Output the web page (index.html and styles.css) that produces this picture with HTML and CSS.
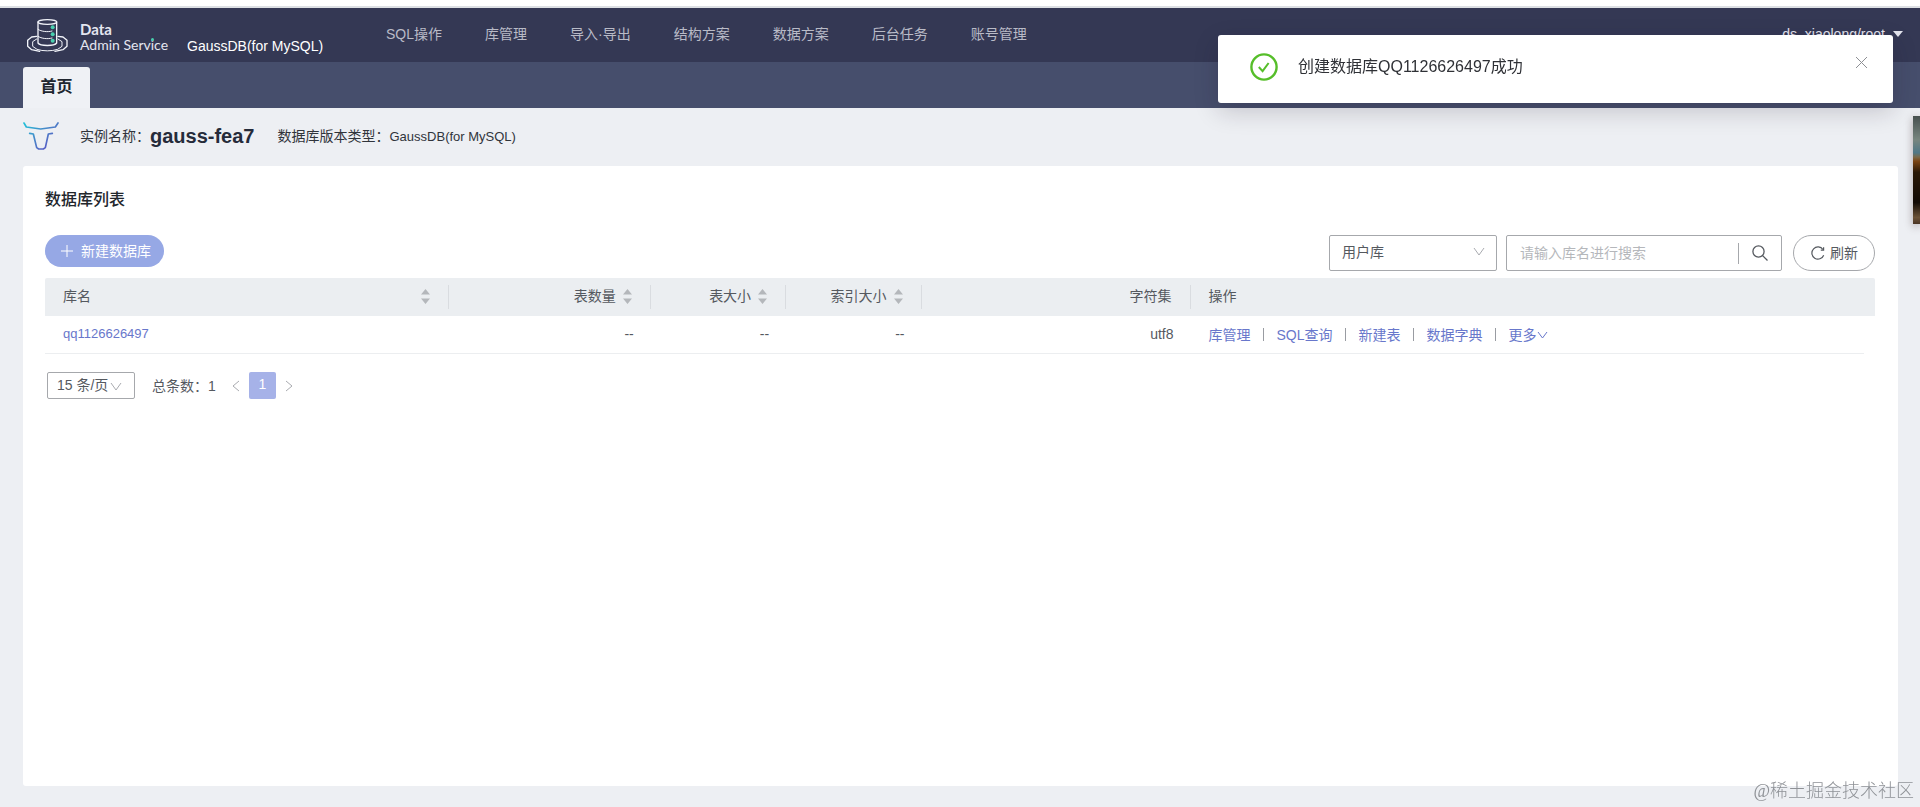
FILE: index.html
```html
<!DOCTYPE html>
<html lang="zh-CN">
<head>
<meta charset="utf-8">
<title>Data Admin Service</title>
<link rel="stylesheet" href="styles.css">
</head>
<body>
<header class="topbar">
  <div class="brand">
    <svg class="brand-logo" viewBox="0 0 123 99" fill="none" stroke="#f2f4fa" stroke-width="4" stroke-linecap="round" stroke-linejoin="round" aria-hidden="true">
      <ellipse cx="61" cy="9" rx="28" ry="7"/>
      <path d="M33 9V72C40 82 82 82 89 72V9"/>
      <path d="M33 31c10 7 30 9 42 5M33 52c10 7 30 9 42 5" stroke-width="3"/>
      <path d="M29 60 17 68v14l13 9c18 6 44 6 62 0l13-9V68L93 60" stroke-width="3"/>
      <path d="M29 52 14 54 2 64v18l12 10 24 5M93 52l15 2 12 10v18l-12 10-24 5"/>
      <g fill="#48cfae" stroke="none"><circle cx="77" cy="25" r="6"/><circle cx="77" cy="46" r="6"/><circle cx="77" cy="65" r="6"/></g>
    </svg>
    <div class="brand-name"><strong>Data</strong><span>Admin Serv<span class="dotted">i</span>ce</span></div>
    <span class="brand-engine">GaussDB(for MySQL)</span>
  </div>
  <nav class="menu">
    <a href="#">SQL操作</a>
    <a href="#">库管理</a>
    <a href="#">导入·导出</a>
    <a href="#">结构方案</a>
    <a href="#">数据方案</a>
    <a href="#">后台任务</a>
    <a href="#">账号管理</a>
  </nav>
  <button class="user" type="button">ds_xiaolong/root
    <svg viewBox="0 0 10 6" aria-hidden="true"><path d="M0 0h10L5 6z" fill="currentColor"/></svg>
  </button>
</header>
<div class="tabs"><a class="tab" href="#">首页</a></div>

<section class="instance">
  <svg class="instance-icon" viewBox="0 0 108 84" fill="none" stroke="url(#bull)" stroke-width="5" stroke-linecap="round" stroke-linejoin="round" aria-hidden="true">
    <defs><linearGradient id="bull" gradientUnits="userSpaceOnUse" x1="10" y1="0" x2="85" y2="84"><stop offset="0" stop-color="#22bfd8"/><stop offset=".5" stop-color="#4a86c8"/><stop offset="1" stop-color="#5a4fc4"/></linearGradient></defs>
    <path d="M3 3 10 15 53 21 97 15 105 3"/>
    <path d="M20 34l11 2 10 41 6 4h14l6-4 9-41 12-2"/>
  </svg>
  <span class="instance-label">实例名称：</span>
  <strong class="instance-name">gauss-fea7</strong>
  <span>数据库版本类型：<span class="engine">GaussDB(for MySQL)</span></span>
</section>

<main class="card">
  <h1 class="card-title">数据库列表</h1>
  <div class="toolbar">
    <button class="create" type="button">
      <svg viewBox="0 0 12 12" stroke="currentColor" aria-hidden="true"><path d="M6 0v12M0 6h12"/></svg>新建数据库
    </button>
    <div class="filters">
      <div class="select-box">
        <select class="select" aria-label="库类型"><option>用户库</option></select>
        <svg class="chevron" viewBox="0 0 12 9" aria-hidden="true"><path d="M1 1l5 7 5-7"/></svg>
      </div>
      <div class="search">
        <input type="text" placeholder="请输入库名进行搜索" aria-label="搜索库名">
        <button type="button" aria-label="搜索">
          <svg viewBox="0 0 16 16" fill="none" stroke="currentColor" stroke-width="1.3" aria-hidden="true"><circle cx="6.5" cy="6.5" r="5.6"/><path d="M10.6 10.6 15.5 15.5"/></svg>
        </button>
      </div>
      <button class="refresh" type="button">
        <svg viewBox="0 0 14 14" fill="none" stroke="currentColor" stroke-width="1.2" aria-hidden="true"><path d="M12.7 9.2A6.1 6.1 0 1 1 12 3.5"/><path d="M12.6 1.2v3H9.800"/></svg>刷新
      </button>
    </div>
  </div>

  <table class="grid">
    <colgroup><col class="c-name"><col class="c-count"><col class="c-size"><col class="c-size"><col class="c-charset"><col></colgroup>
    <thead>
      <tr>
        <th><div class="head spread">库名<svg class="sort" viewBox="0 0 9 15" aria-hidden="true"><path d="M0 5.500 4.500 0 9 5.500zM0 9.500h9L4.500 15z"/></svg></div></th>
        <th><div class="head">表数量<svg class="sort" viewBox="0 0 9 15" aria-hidden="true"><path d="M0 5.500 4.500 0 9 5.500zM0 9.500h9L4.500 15z"/></svg></div></th>
        <th><div class="head">表大小<svg class="sort" viewBox="0 0 9 15" aria-hidden="true"><path d="M0 5.500 4.500 0 9 5.500zM0 9.500h9L4.500 15z"/></svg></div></th>
        <th><div class="head">索引大小<svg class="sort" viewBox="0 0 9 15" aria-hidden="true"><path d="M0 5.500 4.500 0 9 5.500zM0 9.500h9L4.500 15z"/></svg></div></th>
        <th><div class="head">字符集</div></th>
        <th><div class="head spread last">操作</div></th>
      </tr>
    </thead>
    <tbody>
      <tr>
        <td class="name"><a href="#">qq1126626497</a></td>
        <td>--</td>
        <td>--</td>
        <td>--</td>
        <td>utf8</td>
        <td class="ops"><div class="actions">
          <a href="#">库管理</a><i class="bar"></i><a href="#">SQL查询</a><i class="bar"></i><a href="#">新建表</a><i class="bar"></i><a href="#">数据字典</a><i class="bar"></i><a class="more" href="#">更多<svg viewBox="0 0 11 8" fill="none" stroke="currentColor" aria-hidden="true"><path d="M1 1l4.500 6L10 1"/></svg></a>
        </div></td>
      </tr>
    </tbody>
  </table>

  <div class="pager">
    <div class="select-box small">
      <select class="select" aria-label="每页条数"><option>15 条/页</option></select>
      <svg class="chevron" viewBox="0 0 12 9" aria-hidden="true"><path d="M1 1l5 7 5-7"/></svg>
    </div>
    <span class="total">总条数：1</span>
    <button class="arrow" type="button" aria-label="上一页"><svg viewBox="0 0 8 12" aria-hidden="true"><path d="M7 1 1 6l6 5"/></svg></button>
    <button class="page" type="button">1</button>
    <button class="arrow" type="button" aria-label="下一页"><svg viewBox="0 0 8 12" aria-hidden="true"><path d="M1 1l6 5-6 5"/></svg></button>
  </div>
</main>

<div class="side-photo"></div>

<div class="toast" role="status">
  <svg class="toast-icon" viewBox="0 0 28 28" fill="none" stroke="#56be2a" stroke-width="2.4" aria-hidden="true"><circle cx="14" cy="14" r="12.600"/><path d="M8.800 14l3.800 4.200 6-8.200" stroke-width="2"/></svg>
  <span class="toast-text">创建数据库QQ1126626497成功</span>
  <button class="toast-close" type="button" aria-label="关闭"><svg viewBox="0 0 11 11" stroke="currentColor" aria-hidden="true"><path d="M0 0l11 11M11 0 0 11"/></svg></button>
</div>
<div class="watermark">@稀土掘金技术社区</div>
</body>
</html>
```
FILE: styles.css
```css
* { box-sizing: border-box; }

body {
  margin: 0;
  min-height: 100vh;
  display: flex;
  flex-direction: column;
  background: #edeff3;
  color: #55595f;
  font: 14px/20px "Liberation Sans", "Noto Sans CJK SC", sans-serif;
  border-top: 6px solid #fff;
}

a { color: inherit; text-decoration: none; }
button, select, input { font: inherit; color: inherit; }
button { padding: 0; border: 0; background: none; }
svg { flex: none; }

.topbar {
  display: flex;
  align-items: center;
  height: 56px;
  padding: 0 17px 0 27px;
  border-top: 2px solid #dde0e4;
  background: #343854;
}

.brand { display: flex; align-items: center; width: 359px; }
.brand-logo { width: 41px; height: 33px; }
.brand-name {
  display: flex;
  flex-direction: column;
  width: 107px;
  padding: 3px 0 0 12px;
  color: #e4e6f0;
  font: 14px/16px Lato, sans-serif;
}
.brand-name strong { font-size: 15px; font-weight: 700; }
.dotted { position: relative; }
.dotted::before {
  content: "";
  position: absolute;
  top: 2px;
  left: 0;
  width: 3px;
  height: 3px;
  border-radius: 50%;
  background: #48cfae;
}
.brand-engine { margin-left: 12px; padding-top: 21px; color: #fff; }

.menu { display: flex; gap: 43px; padding-bottom: 2px; color: #b9bbc7; }

.user {
  display: flex;
  align-items: center;
  gap: 8px;
  margin-left: auto;
  padding-bottom: 2px;
  color: #e4e5ee;
}
.user svg { width: 10px; height: 6px; }

.tabs {
  height: 46px;
  padding: 5px 23px 0;
  background: #464e6c;
}
.tab {
  display: block;
  width: 67px;
  height: 41px;
  border-radius: 3px 3px 0 0;
  background: #eff1f5;
  color: #20262f;
  font-size: 16px;
  font-weight: 700;
  line-height: 40px;
  text-align: center;
}

.instance {
  display: flex;
  align-items: center;
  height: 58px;
  padding: 0 23px 2px;
  color: #30343b;
}
.instance-icon { width: 36px; height: 28px; }
.instance-label { margin-left: 21px; }
.instance-name { margin-right: 23px; color: #252b3a; font-size: 20px; }
.engine { font-size: 13px; }

.card {
  flex: 1;
  margin: 0 22px 21px 23px;
  padding: 22px 23px 0 22px;
  border-radius: 3px;
  background: #fff;
}
.card-title {
  margin: 0;
  color: #22262c;
  font-size: 16px;
  font-weight: 500;
  line-height: 24px;
}

.toolbar {
  display: flex;
  justify-content: space-between;
  align-items: flex-start;
  margin: 23px 0 7px;
}
.create {
  display: flex;
  align-items: center;
  gap: 8px;
  height: 32px;
  padding: 0 13px 0 16px;
  border-radius: 16px;
  background: #96a8e5;
  color: #fff;
}
.create svg { width: 12px; height: 12px; }

.filters { display: flex; }
.select-box { display: grid; width: 168px; height: 36px; margin-right: 9px; }
.select-box > * { grid-area: 1 / 1; }
.select {
  width: 100%;
  padding: 0 12px 2px;
  border: 1px solid #a6a8ac;
  border-radius: 2px;
  background: #fff;
  appearance: none;
}
.chevron {
  width: 12px;
  height: 9px;
  margin: 0 12px 3px 0;
  place-self: center end;
  fill: none;
  stroke: #a9abb0;
  pointer-events: none;
}

.search {
  display: flex;
  align-items: center;
  width: 276px;
  height: 36px;
  margin-right: 11px;
  border: 1px solid #a6a8ac;
  border-radius: 2px;
}
.search input {
  flex: 1;
  min-width: 0;
  padding: 0 13px;
  border: 0;
  outline: 0;
  background: none;
}
.search input::placeholder { color: #b5b7bb; }
.search button {
  display: flex;
  height: 21px;
  padding: 2px 13px;
  border-left: 1px solid #a6a8ac;
}
.search svg { width: 16px; height: 16px; }

.refresh {
  display: flex;
  align-items: center;
  gap: 5px;
  height: 36px;
  padding: 0 16px 0 17px;
  border: 1px solid #a6a8ac;
  border-radius: 18px;
}
.refresh svg { width: 14px; height: 14px; }

.grid {
  width: 100%;
  border-spacing: 0;
  table-layout: fixed;
}
.c-name { width: 22.1%; }
.c-count { width: 11%; }
.c-size { width: 7.4%; }
.c-charset { width: 14.7%; }
.grid th { height: 38px; padding: 0; background: #ebeef1; font-weight: 400; }
.grid th:first-child { border-radius: 2px 0 0 0; }
.grid th:last-child { border-radius: 0 2px 0 0; }
.head {
  display: flex;
  align-items: center;
  justify-content: flex-end;
  gap: 7px;
  height: 24px;
  padding: 0 18px 2px;
  border-right: 1px solid #d9dce0;
}
.head.spread { justify-content: space-between; }
.head.last { border: 0; }
.sort { width: 9px; height: 15px; fill: #b4b7bb; }
.grid td {
  height: 38px;
  padding: 0 17px 1px 0;
  border-bottom: 1px solid #eceef0;
  text-align: right;
}
.grid a { color: #6877cb; }
.grid .name { padding-left: 18px; font-size: 13px; text-align: left; }
.grid .ops {
  padding: 0 0 1px 18px;
  border-bottom: 0;
  background: linear-gradient(#eceef0, #eceef0) 0 100% / calc(100% - 11px) 1px no-repeat;
}
.actions { display: flex; align-items: center; }
.bar { width: 1px; height: 13px; margin: 0 13px 0 12px; background: #999ca2; }
.more { display: flex; align-items: center; }
.more svg { width: 11px; height: 8px; }

.pager { display: flex; align-items: center; margin: 18px 2px 0; }
.small { width: 88px; height: 27px; margin-right: 17px; }
.small .select { padding: 0 9px 2px; }
.small .chevron { margin: 2px 13px 0 0; }
.total { margin-right: 16px; }
.arrow { display: flex; }
.arrow svg { width: 8px; height: 12px; fill: none; stroke: #a9abb0; }
.page {
  width: 27px;
  height: 27px;
  margin: 0 9px;
  padding-bottom: 3px;
  border-radius: 2px;
  background: #a6b2e8;
  color: #fff;
}

.side-photo {
  position: fixed;
  top: 116px;
  right: 0;
  width: 7px;
  height: 108px;
  background: linear-gradient(#47504f, #78867f 22%, #4f7887 34%, #7a6a4a 38%, #7a4312 42%, #2a1806 52%, #120b05 80%, #6b5238 94%, #4a3524);
  box-shadow: 0 2px 8px rgba(60, 40, 40, .4);
}

.toast {
  position: fixed;
  top: 35px;
  right: 27px;
  display: flex;
  align-items: flex-start;
  width: 675px;
  height: 68px;
  padding: 18px 26px 0 32px;
  border-radius: 3px;
  background: #fff;
  box-shadow: 0 8px 24px rgba(30, 20, 40, .2);
}
.toast-icon { width: 28px; height: 28px; }
.toast-text { margin-left: 20px; color: #2f3136; font-size: 16px; line-height: 28px; }
.toast-close { margin: 4px 0 0 auto; color: #8d8f94; line-height: 0; }
.toast-close svg { width: 11px; height: 11px; }

.watermark {
  position: fixed;
  right: 6px;
  bottom: 4px;
  color: #8f9297;
  font: 300 18px/24px "Liberation Serif", "Noto Sans CJK SC", serif;
}
```
